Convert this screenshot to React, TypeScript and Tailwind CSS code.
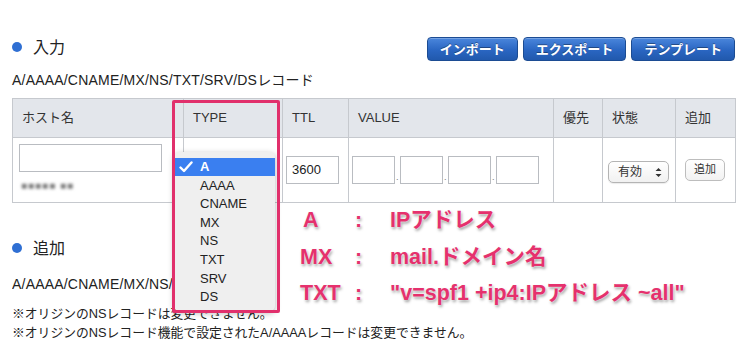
import React from "react";

const font = "font-['Liberation_Sans','Noto_Sans_CJK_JP',sans-serif]";

function ToolButton({ label }: { label: string }) {
  return (
    <button className="h-[24px] rounded-[4px] border border-[#1c4c93] bg-[linear-gradient(#4a86dc,#2a66c2_55%,#2159ad)] px-[12px] text-[13px] font-bold leading-none text-white [text-shadow:0_-1px_0_rgba(0,0,0,0.35)] shadow-[inset_0_1px_0_rgba(255,255,255,0.25)]">
      {label}
    </button>
  );
}

function SectionTitle({ children }: { children: React.ReactNode }) {
  return (
    <div className="flex items-center gap-[11px]">
      <span className="-mt-[3px] h-[10px] w-[10px] rounded-full bg-[#2f6fd3]" />
      <span className="text-[16px] leading-[20px] text-[#222]">{children}</span>
    </div>
  );
}

const box = "h-[28px] border border-[#b9bcc1] bg-white";

export default function App() {
  const types = ["AAAA", "CNAME", "MX", "NS", "TXT", "SRV", "DS"];
  const notes = [
    { k: "A", v: "IPアドレス", top: "top-[208px]", pad: "pl-[3px]" },
    { k: "MX", v: "mail.ドメイン名", top: "top-[245px]", pad: "" },
    { k: "TXT", v: "\"v=spf1 +ip4:IPアドレス ~all\"", top: "top-[281px]", pad: "" },
  ];

  return (
    <div className={`relative h-[347px] w-[750px] overflow-hidden bg-white text-[#222] ${font}`}>
      <div className="pl-[12px] pr-[15px] pt-[34px]">
        <div className="flex items-start justify-between">
          <div className="pt-[4px]">
            <SectionTitle>入力</SectionTitle>
          </div>
          <div className="mt-[3px] flex gap-[5px]">
            <ToolButton label="インポート" />
            <ToolButton label="エクスポート" />
            <ToolButton label="テンプレート" />
          </div>
        </div>

        <p className="mt-[11px] text-[14px] leading-[16px] tracking-[0.2px]">A/AAAA/CNAME/MX/NS/TXT/SRV/DSレコード</p>

        <table className="mt-[10px] w-[723px] table-fixed border-collapse text-[13px]">
          <colgroup>
            <col className="w-[171px]" />
            <col className="w-[99px]" />
            <col className="w-[66px]" />
            <col className="w-[205px]" />
            <col className="w-[49px]" />
            <col className="w-[73px]" />
            <col className="w-[60px]" />
          </colgroup>
          <thead>
            <tr className="h-[39px] bg-[#e3e6eb] text-left text-[#333]">
              {["ホスト名", "TYPE", "TTL", "VALUE", "優先", "状態", "追加"].map((h) => (
                <th key={h} className="border border-[#c6c9ce] px-[9px] font-normal">
                  {h}
                </th>
              ))}
            </tr>
          </thead>
          <tbody>
            <tr className="h-[65px]">
              <td className="border border-[#c6c9ce] px-[6px] pt-[6px] pb-[10px] align-top">
                <div className={`${box} w-[143px]`} />
                <div className="mt-[8px] ml-[2px] w-fit text-[10px] leading-[12px] tracking-[1px] text-[#777] blur-[1.5px]">
                  ■■■■■ ■■
                </div>
              </td>
              <td className="border border-[#c6c9ce]" />
              <td className="border border-[#c6c9ce] px-[3px]">
                <div className={`${box} flex w-[53px] items-center px-[5px] text-[13px]`}>3600</div>
              </td>
              <td className="border border-[#c6c9ce] px-[3px]">
                <div className="flex items-end gap-[1px]">
                  {[0, 1, 2, 3].map((i) => (
                    <React.Fragment key={i}>
                      {i > 0 && <span className="mb-[2px] w-[3px] text-[9px] leading-none text-[#777]">.</span>}
                      <div className={`${box} w-[43px]`} />
                    </React.Fragment>
                  ))}
                </div>
              </td>
              <td className="border border-[#c6c9ce]" />
              <td className="border border-[#c6c9ce] px-[5px] pt-[4px]">
                <div className="flex h-[22px] w-[61px] items-center justify-between rounded-[5px] border border-[#b4b4b4] bg-[linear-gradient(#fff,#f1f1f1)] pl-[9px] pr-[6px] text-[12px] text-[#333] shadow-[0_1px_1px_rgba(0,0,0,0.08)]">
                  <span>有効</span>
                  <svg width="7" height="11" viewBox="0 0 7 11">
                    <path d="M0.5 4 L3.5 1 L6.5 4 Z M0.5 7 L3.5 10 L6.5 7 Z" fill="#333" />
                  </svg>
                </div>
              </td>
              <td className="border border-[#c6c9ce] px-[9px]">
                <button className="-mt-[4px] h-[22px] w-[40px] rounded-[5px] border border-[#bdbdbd] bg-[linear-gradient(#fff,#f2f2f2)] text-[11px] text-[#333]">
                  追加
                </button>
              </td>
            </tr>
          </tbody>
        </table>

        <div className="mt-[36px]">
          <SectionTitle>追加</SectionTitle>
        </div>
        {/* the rest of this line sits under the open dropdown */}
        <p className="mt-[17px] w-[262px] overflow-hidden whitespace-nowrap text-[14px] leading-[16px] tracking-[0.2px]">
          A/AAAA/CNAME/MX/NS/TXT/SRV/DSレコード
        </p>
        <p className="mt-[14px] text-[12.8px] leading-[16px]">※オリジンのNSレコードは変更できません。</p>
        <p className="mt-[3px] text-[12.8px] leading-[16px]">※オリジンのNSレコード機能で設定されたA/AAAAレコードは変更できません。</p>
      </div>

      {/* open TYPE dropdown */}
      <div className="absolute left-[174px] top-[152px] w-[101px] rounded-[5px] bg-[#efefef] pb-[5px] pt-[6px] text-[13px] text-[#222] shadow-[0_2px_6px_rgba(0,0,0,0.3)]">
        <div className="flex h-[18px] items-center bg-[#3a7ff0] font-bold text-white">
          <svg className="ml-[5px] mr-[7px]" width="14" height="12" viewBox="0 0 14 12">
            <path d="M1.5 6.5 L5 10 L12.5 1.5" stroke="#fff" strokeWidth="2.4" fill="none" strokeLinecap="round" strokeLinejoin="round" />
          </svg>
          A
        </div>
        {types.map((t) => (
          <div key={t} className="flex h-[18.6px] items-center pl-[26px]">
            {t}
          </div>
        ))}
      </div>

      {/* highlight frame */}
      <div className="pointer-events-none absolute left-[172px] top-[100px] h-[213px] w-[108px] rounded-[2px] border-[3px] border-[#e1306c]" />

      {/* annotations */}
      {notes.map((n) => (
        <div
          key={n.k}
          className={`absolute left-[300px] ${n.top} flex h-[24px] items-center text-[21.5px] font-bold leading-[24px] text-[#e5316d] [text-shadow:0_0_2px_#fff,1px_2px_3px_rgba(0,0,0,0.4)]`}
        >
          <span className={`w-[55px] ${n.pad}`}>{n.k}</span>
          <span className="w-[35px]">:</span>
          <span>{n.v}</span>
        </div>
      ))}
    </div>
  );
}
